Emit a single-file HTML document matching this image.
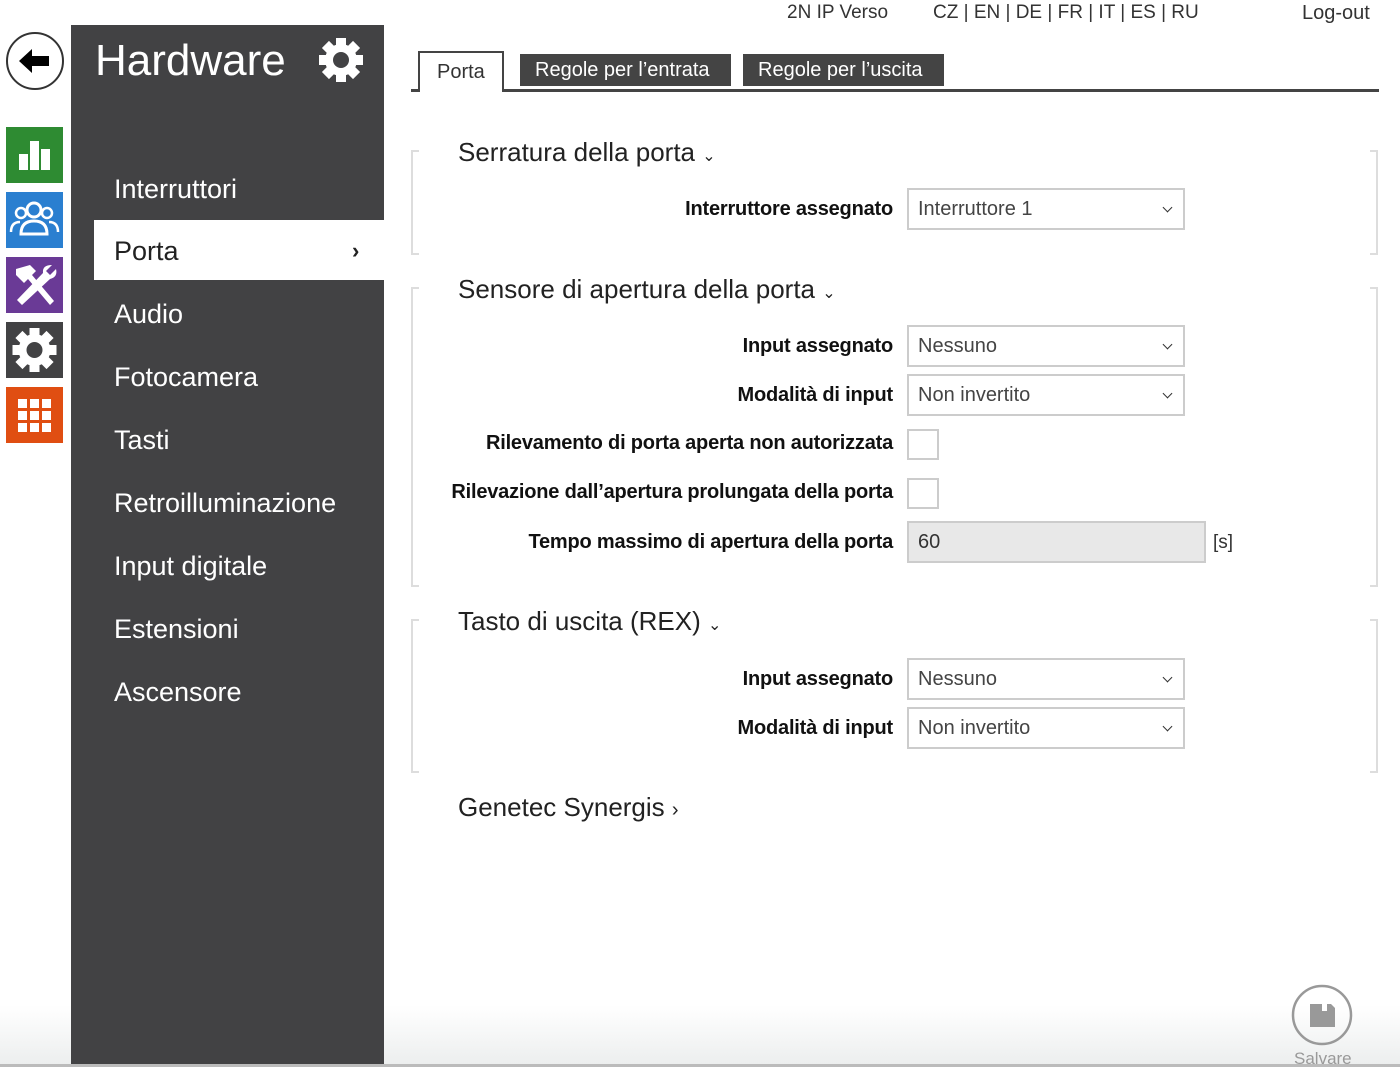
<!DOCTYPE html>
<html><head><meta charset="utf-8">
<style>
*{margin:0;padding:0;box-sizing:border-box}
body{width:1400px;height:1067px;position:relative;overflow:hidden;background:#fff;font-family:"Liberation Sans",sans-serif;color:#222}
.a{position:absolute}
.tile{position:absolute;left:6px;width:57px;height:56px}
.panel{left:71px;top:25px;width:313px;height:1042px;background:#424244}
.mi{position:absolute;left:114px;color:#fff;font-size:27px;white-space:nowrap}
.top{top:2px;font-size:19px;color:#333;white-space:nowrap}
.sec{position:absolute;left:411px;width:967px;}
.bl{position:absolute;left:0;top:0;bottom:0;width:8px;border:2px solid #ddd;border-right:none}
.br{position:absolute;right:0;top:0;bottom:0;width:8px;border:2px solid #ddd;border-left:none}
.st{position:absolute;left:47px;font-size:26px;color:#222;white-space:nowrap}
.lab{position:absolute;right:485px;font-size:20px;font-weight:bold;color:#111;white-space:nowrap;text-align:right;letter-spacing:-0.2px}
.sel{position:absolute;left:496px;width:278px;height:42px;border:2px solid #ccc;background:#fff;font-size:20px;color:#444;padding:8px 0 0 9px}
.dd:after{content:"";position:absolute;right:12px;top:14px;width:6px;height:6px;border-right:1.5px solid #333;border-bottom:1.5px solid #333;transform:rotate(45deg)}
.cb{position:absolute;left:496px;width:32px;height:31px;border:2px solid #ccc;background:#fff}
</style></head><body>

<svg class="a" style="left:5px;top:31px" width="60" height="60" viewBox="0 0 60 60">
<circle cx="30" cy="30" r="28" fill="#fff" stroke="#333" stroke-width="2"/>
<path d="M14 30 L27 18 L27 25 L44 25 L44 35 L27 35 L27 42 Z" fill="#000"/>
</svg>
<div class="tile" style="top:127px;background:#2e8b32">
<svg width="57" height="56"><rect x="13" y="27" width="9" height="16" fill="#fff"/><rect x="24" y="14" width="9" height="29" fill="#fff"/><rect x="35" y="22" width="9" height="21" fill="#fff"/></svg></div>
<div class="tile" style="top:192px;background:#2a7fd0">
<svg width="57" height="56"><circle cx="28" cy="18" r="7" fill="none" stroke="#fff" stroke-width="3"/><path d="M15 42 Q15 29 28 29 Q41 29 41 42 Z" fill="none" stroke="#fff" stroke-width="3"/><circle cx="15" cy="21" r="5" fill="none" stroke="#fff" stroke-width="2.5"/><circle cx="41" cy="21" r="5" fill="none" stroke="#fff" stroke-width="2.5"/><path d="M5 40 Q5 30 14 30 M52 40 Q52 30 43 30" fill="none" stroke="#fff" stroke-width="2.5"/></svg></div>
<div class="tile" style="top:257px;background:#6a3a96">
<svg width="57" height="56"><path d="M10 12 L24 8 L30 14 L26 18 L48 44 L44 48 L22 22 L18 26 L10 18 Z" fill="#fff"/><path d="M46 8 L40 14 L44 18 L50 12 Q52 20 44 22 L16 48 L11 43 L37 16 Q36 8 46 8 Z" fill="#fff"/></svg></div>
<div class="tile" style="top:322px;background:#424244">
<svg width="57" height="56" viewBox="0 0 57 56"><g transform="translate(28.5 28)"><g fill="#fff"><circle r="16"/><rect x="-5" y="-22" width="10" height="44"/><rect x="-5" y="-22" width="10" height="44" transform="rotate(45)"/><rect x="-5" y="-22" width="10" height="44" transform="rotate(90)"/><rect x="-5" y="-22" width="10" height="44" transform="rotate(135)"/></g><circle r="8" fill="#424244"/></g></svg></div>
<div class="tile" style="top:387px;background:#e04e12">
<svg width="57" height="56"><g fill="#fff"><rect x="12" y="12" width="9" height="9"/><rect x="24" y="12" width="9" height="9"/><rect x="36" y="12" width="9" height="9"/><rect x="12" y="24" width="9" height="9"/><rect x="24" y="24" width="9" height="9"/><rect x="36" y="24" width="9" height="9"/><rect x="12" y="36" width="9" height="9"/><rect x="24" y="36" width="9" height="9"/><rect x="36" y="36" width="9" height="9"/></g></svg></div>

<div class="a panel"></div>
<div class="a" style="left:95px;top:36px;font-size:44px;color:#fff">Hardware</div>
<svg class="a" style="left:318px;top:37px" width="46" height="46" viewBox="0 0 46 46"><g transform="translate(23 23)"><g fill="#fff"><circle r="16"/><rect x="-5" y="-22" width="10" height="44"/><rect x="-5" y="-22" width="10" height="44" transform="rotate(45)"/><rect x="-5" y="-22" width="10" height="44" transform="rotate(90)"/><rect x="-5" y="-22" width="10" height="44" transform="rotate(135)"/></g><circle r="8" fill="#424244"/></g></svg>
<div class="mi" style="top:174px">Interruttori</div>
<div class="a" style="left:94px;top:220px;width:290px;height:60px;background:#fff"></div>
<div class="mi" style="top:236px;color:#222">Porta</div>
<div class="a" style="left:352px;top:238px;font-size:22px;font-weight:bold;color:#222">›</div>
<div class="mi" style="top:299px">Audio</div>
<div class="mi" style="top:362px">Fotocamera</div>
<div class="mi" style="top:425px">Tasti</div>
<div class="mi" style="top:488px">Retroilluminazione</div>
<div class="mi" style="top:551px">Input digitale</div>
<div class="mi" style="top:614px">Estensioni</div>
<div class="mi" style="top:677px">Ascensore</div>

<div class="a top" style="left:787px">2N IP Verso</div>
<div class="a top" style="left:933px">CZ | EN | DE | FR | IT | ES | RU</div>
<div class="a top" style="left:1302px;font-size:20px">Log-out</div>

<div class="a" style="left:411px;top:89px;width:968px;height:3px;background:#444"></div>
<div class="a" style="left:418px;top:51px;width:86px;height:41px;border:2px solid #444;border-bottom:none;background:#fff;font-size:20px;color:#333;padding:8px 0 0 17px">Porta</div>
<div class="a" style="left:411px;top:89px;width:9px;height:3px;background:#444"></div>
<div class="a" style="left:520px;top:54px;width:211px;height:32px;background:#444;color:#fff;font-size:20px;padding:5px 0 0 15px;white-space:nowrap">Regole per l’entrata</div>
<div class="a" style="left:743px;top:54px;width:201px;height:32px;background:#444;color:#fff;font-size:20px;padding:5px 0 0 15px;white-space:nowrap">Regole per l’uscita</div>

<div class="sec" style="top:150px;height:105px"><div class="bl"></div><div class="br"></div></div>
<div class="a st" style="left:458px;top:137px">Serratura della porta <span style="font-size:16px">⌄</span></div>
<div class="sec" style="top:0;height:0">
<div class="lab" style="top:198px">Interruttore assegnato</div>
<div class="sel dd" style="top:188px">Interruttore 1</div>
</div>

<div class="sec" style="top:287px;height:300px"><div class="bl"></div><div class="br"></div></div>
<div class="a st" style="left:458px;top:274px">Sensore di apertura della porta <span style="font-size:16px">⌄</span></div>
<div class="sec" style="top:0;height:0">
<div class="lab" style="top:335px">Input assegnato</div>
<div class="sel dd" style="top:325px">Nessuno</div>
<div class="lab" style="top:384px">Modalità di input</div>
<div class="sel dd" style="top:374px">Non invertito</div>
<div class="lab" style="top:432px">Rilevamento di porta aperta non autorizzata</div>
<div class="cb" style="top:429px"></div>
<div class="lab" style="top:481px">Rilevazione dall’apertura prolungata della porta</div>
<div class="cb" style="top:478px"></div>
<div class="lab" style="top:531px">Tempo massimo di apertura della porta</div>
<div class="sel" style="top:521px;width:299px;background:#e8e8e8;color:#333;border-color:#ccc">60</div>
<div class="a" style="left:802px;top:532px;font-size:19px;color:#333">[s]</div>
</div>

<div class="sec" style="top:619px;height:154px"><div class="bl"></div><div class="br"></div></div>
<div class="a st" style="left:458px;top:606px">Tasto di uscita (REX) <span style="font-size:16px">⌄</span></div>
<div class="sec" style="top:0;height:0">
<div class="lab" style="top:668px">Input assegnato</div>
<div class="sel dd" style="top:658px">Nessuno</div>
<div class="lab" style="top:717px">Modalità di input</div>
<div class="sel dd" style="top:707px">Non invertito</div>
</div>

<div class="a st" style="left:458px;top:792px">Genetec Synergis <span style="font-size:20px">›</span></div>

<div class="a" style="left:0;top:1005px;width:1400px;height:60px;background:linear-gradient(#fff,#eceeee)"></div>
<div class="a" style="left:71px;top:1005px;width:313px;height:62px;background:#424244"></div>
<div class="a" style="left:0;top:1064px;width:1400px;height:3px;background:#bbb"></div>
<svg class="a" style="left:1291px;top:984px" width="62" height="62"><circle cx="31" cy="31" r="29" fill="none" stroke="#999" stroke-width="2.5"/><path d="M19 20 H40 L44 24 V43 H19 Z" fill="#999"/><rect x="31" y="20" width="5" height="7" fill="#fff"/></svg>
<div class="a" style="left:1294px;top:1049px;font-size:17px;color:#999">Salvare</div>
</body></html>
